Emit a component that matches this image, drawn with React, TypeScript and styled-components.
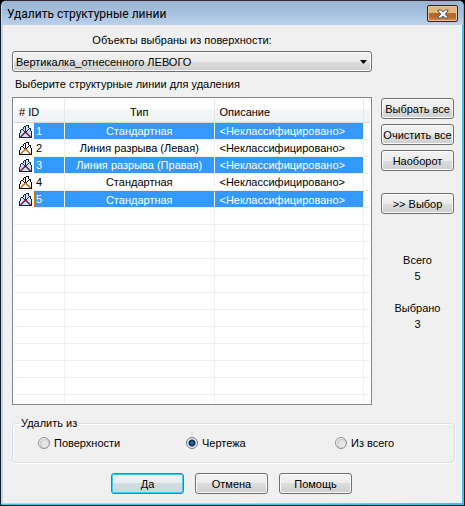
import React, { useState } from 'react';
import styled, { createGlobalStyle, css } from 'styled-components';

const Page = createGlobalStyle`
  * { box-sizing: border-box; }
  html, body { margin: 0; height: 100%; background: #000; }
  body, button, select, input, table {
    font-family: "Liberation Sans", Arial, sans-serif;
    font-size: 11px;
    color: #000;
  }
`;

const Dialog = styled.main`
  display: flex;
  flex-direction: column;
  height: 100vh;
  min-height: 460px;
  padding: 0 2px 2px;
  border: 1px solid #101822;
  border-top-color: #33262c;
  border-radius: 6px 6px 0 0;
  background: linear-gradient(90deg, #c4d9ee 1px, #b9d1ea 2px, transparent 3px),
    linear-gradient(90deg, #b9d1ea 50%, #35c3ee 100%);
  box-shadow: inset 0 -1px 0 #2cc3ea, inset 0 1px 0 #e5eff9;
`;

const TitleBar = styled.header`
  display: flex;
  flex: none;
  align-items: center;
  justify-content: space-between;
  height: 24px;
  margin: 0 -1px;
  padding: 0 5px;
  border-radius: 5px 5px 0 0;
  background: linear-gradient(#98b4d2, #a6c0dc 50%, #b9d1ea);
`;

const Title = styled.h1`
  margin: 0;
  padding-top: 2px;
  font: 12px/16px Roboto, "Noto Sans", sans-serif;
`;

const CloseButton = styled.button`
  display: grid;
  place-items: center;
  width: 31px;
  height: 17px;
  margin-top: 1px;
  padding: 0;
  border: 1px solid #4a1420;
  border-radius: 2px;
  box-shadow: inset 0 0 0 1px #e8c69a;
  background: linear-gradient(#e0b67e 45%, #b8662a 45%, #b8662a 70%, #cf9048);
`;

const Body = styled.form`
  display: flex;
  flex: 1;
  flex-direction: column;
  min-height: 0;
  padding: 8px 7px 9px 9px;
  background: #f0f0f0;
`;

const Picker = styled.section`
  display: grid;
  grid-template-columns: minmax(0, 1fr) 73px;
  column-gap: 9px;
  flex: 1;
  min-height: 0;
  padding-right: 1px;
`;

const Main = styled.div`
  display: flex;
  flex-direction: column;
  min-height: 0;
`;

const SurfaceLabel = styled.label`
  height: 18px;
  padding-right: 20px;
  line-height: 14px;
  text-align: center;
`;

const ListCaption = styled.p`
  height: 25px;
  margin: 0;
  padding: 5px 3px;
  line-height: 14px;
`;

const SelectBox = styled.div`
  position: relative;
  height: 21px;

  svg {
    position: absolute;
    top: 9px;
    right: 5px;
    pointer-events: none;
  }
`;

const Raised = css`
  border: 1px solid #707070;
  border-radius: 3px;
  box-shadow: inset 0 0 0 1px #fbfbfb;
  background: linear-gradient(#f2f2f2, #ebebeb 50%, #dddddd 50%, #cfcfcf);
`;

const Select = styled.select`
  ${Raised}
  appearance: none;
  display: block;
  width: 100%;
  height: 21px;
  padding: 0 20px 0 3px;
`;

const ListFrame = styled.div`
  flex: 1 1 0;
  min-height: 0;
  overflow: hidden;
  padding: 1px 1px 0;
  border: 1px solid #828790;
  background: #fff;
`;

const Table = styled.table`
  width: 100%;
  table-layout: fixed;
  border-collapse: separate;
  border-spacing: 0;
`;

const HeadCell = styled.th<{ $align?: string }>`
  height: 24px;
  padding: 2px 5px 0;
  border-right: 1px solid #e3e8ee;
  border-bottom: 1px solid #d5d5d5;
  background: linear-gradient(#fff 40%, #f5f6f8 45%, #f1f2f4);
  font-weight: normal;
  text-align: ${(p) => p.$align || 'left'};
  white-space: nowrap;

  &:last-child { border-right: 0; }
`;

const Row = styled.tr<{ $selected?: boolean; $focused?: boolean }>`
  td {
    ${(p) => p.$selected && css`background-color: #3399ff; color: #fff;`}
    ${(p) => p.$focused && css`border-top: 1px dotted #c66a1e;`}
  }
  td:last-child { background: #fff; border-top: 0; }
`;

const Cell = styled.td<{ $align?: string }>`
  height: 17px;
  padding: 0 5px;
  border-right: 1px solid #f0f0f0;
  border-bottom: 1px solid #f0f0f0;
  line-height: 14px;
  overflow: hidden;
  text-align: ${(p) => p.$align || 'left'};
  white-space: nowrap;

  &:last-child { border-right: 0; }
`;

const IdCell = styled(Cell)<{ $selected?: boolean; $focused?: boolean }>`
  padding: 0;
  && { background: #fff; border-top: 0; }

  div { display: flex; height: 16px; align-items: center; padding-left: 5px; }
  svg { flex: none; }
  span {
    flex: 1;
    height: 16px;
    margin-left: 2px;
    padding-left: 2px;
    line-height: 16px;
    ${(p) => p.$selected && css`background: #3399ff;`}
    ${(p) => p.$focused && css`
      border: 1px dotted #c66a1e;
      border-width: 1px 0 0 1px;
      padding-left: 1px;
      line-height: 14px;
    `}
  }
`;

const Side = styled.aside`
  display: flex;
  flex-direction: column;
  gap: 5px;
  padding-top: 65px;
  text-align: center;
`;

const Button = styled.button<{ $primary?: boolean; $apart?: boolean }>`
  ${Raised}
  flex: none;
  width: 73px;
  height: 21px;
  margin-top: ${(p) => (p.$apart ? 17 : 0)}px;
  padding: 0;
  white-space: nowrap;
  ${(p) => p.$primary && css`
    border-color: #3c7fb1;
    box-shadow: inset 0 0 0 1px #35d0f4;
    background: linear-gradient(#f0f4f6, #e6edf0 50%, #d2dde2 50%, #cbd8de);
  `}
`;

const Totals = styled.dl`
  margin: 33px 0 0;
  line-height: 16px;

  dd { margin: 0 0 16px; }
`;

const Source = styled.fieldset`
  display: grid;
  grid-template-columns: 148px 149px 1fr;
  flex: none;
  height: 47px;
  margin: 11px 0 10px;
  padding: 4px 0 0 25px;
  border: 1px solid #d5dfe5;
  border-radius: 4px;
  box-shadow: inset 1px 1px 0 #fff, 1px 1px 0 #fff;

  legend {
    margin-left: -19px;
    padding: 0 2px;
    line-height: 14px;
  }
`;

const Choice = styled.label`
  display: flex;
  align-items: center;
  gap: 4px;
  height: 18px;
`;

const Radio = styled.input`
  appearance: none;
  width: 12px;
  height: 12px;
  margin: 0;
  border: 1px solid #8e8f8f;
  border-radius: 50%;
  background: radial-gradient(circle at 60% 60%, #e6e6e6 30%, #c8cbcf 60%, #f4f4f4 65%);

  &:checked {
    border-color: #6b7f96;
    background: radial-gradient(circle, #5fb4e4 0, #1f5c96 1px, #0c2c50 3px, #e9eef2 4px);
  }
`;

const Actions = styled.footer`
  display: flex;
  flex: none;
  justify-content: center;
  gap: 11px;
  padding-right: 4px;
`;

function LineIcon({ selected }: { selected: boolean }) {
  const ink = selected ? '#12233f' : '#000';
  return (
    <svg width="13" height="13" viewBox="0 0 13 13" aria-hidden="true">
      <path d="M.5 12.5V5.5L3.5 4.5L5.5 1.5L9.5 .5L12.5 4.5V12.5Z" fill={selected ? '#cce5fb' : '#fff'} />
      <g fill="none" stroke={ink} shapeRendering="crispEdges">
        <path d="M0 12.5H13M.5 12V8M1.5 8V5M2 4.5H4M4.5 4V2M5 1.5H7M7 .5H10M9.5 1V3M10 3.5H12M11.5 4V6M12.5 6V12" />
        <path d="M6.5 2V7M4.5 5V6M5.5 6V7M8.5 5V6M7.5 6V7M9.5 4V5" />
      </g>
      <path d="M1.5 12L6.5 7L11.5 12" fill="none" stroke={selected ? '#7c1738' : '#c9650d'} strokeWidth="1.5" />
    </svg>
  );
}

const rows = [
  { id: 1, type: 'Стандартная' },
  { id: 2, type: 'Линия разрыва (Левая)' },
  { id: 3, type: 'Линия разрыва (Правая)' },
  { id: 4, type: 'Стандартная' },
  { id: 5, type: 'Стандартная' },
];
const sources = ['Поверхности', 'Чертежа', 'Из всего'];
const blankRows = Array.from({ length: 12 }, (_, i) => i);

const IdColumn = styled.col`width: 51px;`;
const TailColumn = styled.col`width: 6px;`;

export default function App() {
  const [selected, setSelected] = useState<number[]>([1, 3, 5]);
  const [source, setSource] = useState('Чертежа');
  const all = rows.map((r) => r.id);
  const toggle = (id: number) =>
    setSelected((s) => (s.includes(id) ? s.filter((x) => x !== id) : [...s, id]));

  return (
    <>
      <Page />
      <Dialog>
        <TitleBar>
          <Title>Удалить структурные линии</Title>
          <CloseButton type="button" aria-label="Закрыть">
            <svg width="12" height="10" viewBox="0 0 12 10" aria-hidden="true">
              <path d="M1 1H4.2L6 3L7.8 1H11V2L8.2 5L11 8V9H7.8L6 7L4.2 9H1V8L3.8 5L1 2Z" fill="#f5f5f5" stroke="#555b68" />
            </svg>
          </CloseButton>
        </TitleBar>
        <Body onSubmit={(e) => e.preventDefault()}>
          <Picker>
            <Main>
              <SurfaceLabel htmlFor="surface">Объекты выбраны из поверхности:</SurfaceLabel>
              <SelectBox>
                <Select id="surface">
                  <option>Вертикалка_отнесенного ЛЕВОГО</option>
                </Select>
                <svg width="7" height="4" viewBox="0 0 7 4" aria-hidden="true">
                  <path d="M0 0H7L3.5 4Z" />
                </svg>
              </SelectBox>
              <ListCaption>Выберите структурные линии для удаления</ListCaption>
              <ListFrame>
                <Table>
                  <colgroup>
                    <IdColumn />
                    <col />
                    <col />
                    <TailColumn />
                  </colgroup>
                  <thead>
                    <tr>
                      <HeadCell># ID</HeadCell>
                      <HeadCell $align="center">Тип</HeadCell>
                      <HeadCell>Описание</HeadCell>
                      <HeadCell />
                    </tr>
                  </thead>
                  <tbody>
                    {rows.map((r) => {
                      const on = selected.includes(r.id);
                      const focused = r.id === 5;
                      return (
                        <Row key={r.id} $selected={on} $focused={focused} onClick={() => toggle(r.id)}>
                          <IdCell $selected={on} $focused={focused}>
                            <div><LineIcon selected={on} /><span>{r.id}</span></div>
                          </IdCell>
                          <Cell $align="center">{r.type}</Cell>
                          <Cell>&lt;Неклассифицировано&gt;</Cell>
                          <Cell />
                        </Row>
                      );
                    })}
                    {blankRows.map((n) => (
                      <Row key={n}><Cell /><Cell /><Cell /><Cell /></Row>
                    ))}
                  </tbody>
                </Table>
              </ListFrame>
            </Main>
            <Side>
              <Button type="button" onClick={() => setSelected(all)}>Выбрать все</Button>
              <Button type="button" onClick={() => setSelected([])}>Очистить все</Button>
              <Button type="button" onClick={() => setSelected((s) => all.filter((x) => !s.includes(x)))}>Наоборот</Button>
              <Button type="button" $apart>&gt;&gt; Выбор</Button>
              <Totals>
                <dt>Всего</dt>
                <dd>{rows.length}</dd>
                <dt>Выбрано</dt>
                <dd>{selected.length}</dd>
              </Totals>
            </Side>
          </Picker>
          <Source>
            <legend>Удалить из</legend>
            {sources.map((s) => (
              <Choice key={s}>
                <Radio type="radio" name="source" checked={source === s} onChange={() => setSource(s)} />
                {s}
              </Choice>
            ))}
          </Source>
          <Actions>
            <Button type="submit" $primary>Да</Button>
            <Button type="button">Отмена</Button>
            <Button type="button">Помощь</Button>
          </Actions>
        </Body>
      </Dialog>
    </>
  );
}
